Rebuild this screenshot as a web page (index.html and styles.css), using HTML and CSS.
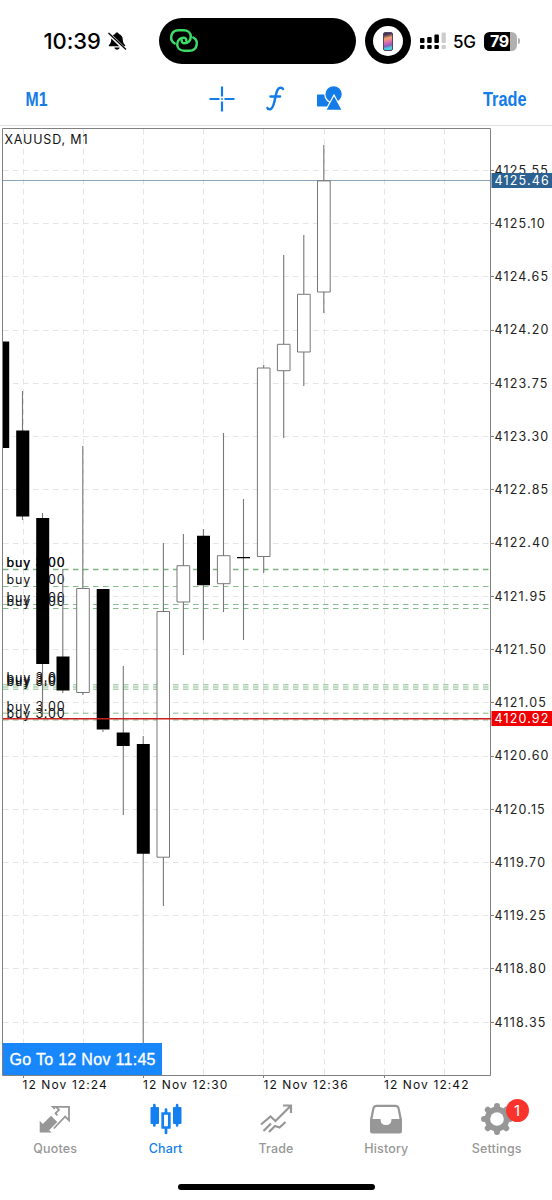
FILE: index.html
```html
<!DOCTYPE html>
<html lang="en">
<head>
<meta charset="utf-8">
<title>XAUUSD, M1</title>
<link rel="stylesheet" href="styles.css">
</head>
<body>
<div class="app">
  <header class="status">
    <span class="time">10:39</span>
    <svg class="bell" viewBox="0 0 20 20"><path d="M10 1.500c1 0 1.700.6 1.800 1.400 2.500.8 3.700 2.600 3.900 5 .2 3.300.6 4.200 2.300 6 .5.600.2 1.300-.6 1.300H2.600c-.8 0-1.100-.7-.6-1.300 1.700-1.800 2.100-2.700 2.300-6 .2-2.400 1.400-4.200 3.900-5 .1-.8.800-1.400 1.800-1.400zM7.400 16.500h5.200c-.2 1.300-1.200 2.200-2.600 2.200s-2.400-.9-2.600-2.200z"/><path class="cut" d="M1.500 2.500l16.500 16"/><path class="slash" d="M1.500 2l17.500 16.500"/></svg>
    <div class="island">
      <svg class="link" viewBox="0 0 30 26"><path d="M5.800 15.500C3 14 1.800 11 2.300 8.300 3 4.300 6 2.300 9.500 2.300h5C19 2.300 21.800 5 21.800 8.500c0 4-2.800 6.800-6.300 6.800-2 0-3-1.200-2.700-2.800M24.200 9.500c2.800 1.500 4 4.500 3.500 7.200-.7 4-3.700 6-7.200 6h-5C11 22.700 8.200 20 8.200 16.500c0-4 2.800-6.800 6.300-6.800 2 0 3 1.200 2.700 2.800"/></svg>
    </div>
    <div class="ring"><div class="ring-in"><span class="phone"></span></div></div>
    <svg class="signal" viewBox="0 0 27 18"><g><rect x="0" y="6" width="4.500" height="5" rx="1"/><rect x="7.200" y="5" width="4.500" height="6" rx="1"/><rect x="14.400" y="2.500" width="4.500" height="8.500" rx="1"/><rect x="0" y="13" width="4.500" height="4" rx="1"/><rect x="7.200" y="13" width="4.500" height="4" rx="1"/><rect x="14.400" y="13" width="4.500" height="4" rx="1"/></g><g class="dim"><rect x="21.600" y="0.500" width="4.200" height="10.500" rx="1"/><rect x="21.600" y="13" width="4.200" height="4" rx="1"/></g></svg>
    <span class="net">5G</span>
    <div class="battery"><span>79</span></div><i class="nub"></i>
  </header>

  <nav class="toolbar">
    <svg class="word m1" viewBox="0 0 32 32"><text x="1.500" y="23" textLength="22" lengthAdjust="spacingAndGlyphs">M1</text></svg>
    <div class="tools">
      <svg class="tool" viewBox="0 0 28 28"><path class="ln" d="M14 1.500v10M14 16.500v10M1.500 14h10M16.500 14h10M13.300 14h1.400"/></svg>
      <svg class="tool" viewBox="0 0 28 28"><path class="ln fx" d="M21 4c-.8-1.500-3.600-1.800-5.200.5-1.500 2-2 6-3.100 11-1.300 5.500-2.300 8.500-4.600 8.800-1.500.2-2.500-.6-2.700-1.300M8.500 11.500h9.500"/></svg>
      <svg class="tool" viewBox="0 0 28 28"><rect x="1" y="9.500" width="12.500" height="12" rx=".7"/><circle class="edge" cx="17.600" cy="9.300" r="8.800"/><path class="edge" d="M18 10L26.500 25.500H9.500z"/></svg>
    </div>
    <svg class="word trade" viewBox="0 0 52 32"><text x="3" y="23" textLength="43.500" lengthAdjust="spacingAndGlyphs">Trade</text></svg>
  </nav>

  <main class="chart">
    <svg viewBox="0 126 552 970">
      <g class="grid">
        <path d="M3 170.500H490M3 223.500H490M3 276.500H490M3 330.500H490M3 383.500H490M3 436.500H490M3 489.500H490M3 543.500H490M3 596.500H490M3 649.500H490M3 702.500H490M3 756.500H490M3 809.500H490M3 862.500H490M3 915.500H490M3 968.500H490M3 1022.500H490"/>
        <path d="M23.500 129V1075M83.500 129V1075M143.500 129V1075M203.500 129V1075M263.500 129V1075M324.500 129V1075M384.500 129V1075M444.500 129V1075"/>
      </g>
      <path class="order" d="M3 586.500H490M3 604.500H490M3 608.500H490M3 684.800H490M3 687H490M3 689.200H490M3 713.200H490M3 720H490"/>
      <path class="order strong" d="M3 569.500H490"/>
      <path class="bid" d="M3 180.500H490"/>
      <g class="buy">
        <text x="6.500" y="566.700">buy 3.00</text><text x="6.500" y="567.200">buy 3.00</text>
        <text x="6.500" y="584">buy 3.00</text>
        <text x="6.500" y="602">buy 3.00</text><text x="6.500" y="606">buy 3.00</text>
        <text x="6.500" y="682">buy 3.00</text><text x="6.500" y="684">buy 3.00</text><text x="6.500" y="686">buy 3.00</text>
        <text x="6.500" y="710.500">buy 3.00</text><text x="6.500" y="717.500">buy 3.00</text>
      </g>
      <path class="wick" d="M22.500 391V431M22.500 516V520M42.500 513V518M42.500 664V717M62.800 569V657M62.800 690V693M82.800 446V588M82.800 692V695M102.900 730V732M123.300 666V733M123.300 745V815M143.200 736V744M143.200 853V1043M163.400 543V611M163.400 857V906M183.400 534V566M183.400 602V655M203.400 529V536M203.400 585V640M223.500 433V556M223.500 583V612M243.500 499V640M263.700 365V368M263.700 556V573M283.700 255V344M283.700 371V438M303.800 235V294M303.800 352V386M323.800 145V181M323.800 292V313"/>
      <g class="down">
        <path d="M3 341.500H9.200V448H3zM16.200 430.500H29.300V516.500H16.200zM36.200 518H49.200V664H36.200zM56.500 656.500H69.500V690.500H56.500zM96.700 589H109.500V729.500H96.700zM116.700 732.500H129.700V746H116.700zM136.800 744H149.800V853.700H136.800zM197 535.700H210V585.300H197zM237 557H250V558.300H237z"/>
      </g>
      <g class="up">
        <path d="M76.700 588.500H89.300V692.500H76.700zM157 611.500H169.500V857.200H157zM177 565.700H189.700V602H177zM217.400 555.700H230V583.700H217.400zM257.400 368H270V556.500H257.400zM277.400 344.300H290V370.700H277.400zM297.500 294.300H310.200V352H297.500zM317.500 180.900H330.200V292H317.500z"/>
      </g>
      <path class="frame" d="M2.500 1075.500V128.500H490.500V1075.500H2.500M490 170.500H494M490 223.500H494M490 276.500H494M490 330.500H494M490 383.500H494M490 436.500H494M490 489.500H494M490 543.500H494M490 596.500H494M490 649.500H494M490 702.500H494M490 756.500H494M490 809.500H494M490 862.500H494M490 915.500H494M490 968.500H494M490 1022.500H494M23.500 1075V1078M143.500 1075V1078M263.500 1075V1078M384.500 1075V1078"/>
      <path class="ask" d="M3 718.700H491"/>
      <text class="symbol" x="4.500" y="144" textLength="83">XAUUSD, M1</text>
      <g class="price">
        <text x="494.500" y="174.500">4125.55</text><text x="494.500" y="227.700">4125.10</text><text x="494.500" y="281">4124.65</text><text x="494.500" y="334.200">4124.20</text><text x="494.500" y="387.500">4123.75</text><text x="494.500" y="440.700">4123.30</text><text x="494.500" y="494">4122.85</text><text x="494.500" y="547.200">4122.40</text><text x="494.500" y="600.500">4121.95</text><text x="494.500" y="653.700">4121.50</text><text x="494.500" y="707">4121.05</text><text x="494.500" y="760.200">4120.60</text><text x="494.500" y="813.500">4120.15</text><text x="494.500" y="866.700">4119.70</text><text x="494.500" y="920">4119.25</text><text x="494.500" y="973.200">4118.80</text><text x="494.500" y="1026.500">4118.35</text>
      </g>
      <g class="hours"><text x="22.500" y="1089">12 Nov 12:24</text><text x="143" y="1089">12 Nov 12:30</text><text x="263.500" y="1089">12 Nov 12:36</text><text x="384" y="1089">12 Nov 12:42</text></g>
      <rect class="bid-tag" x="491.500" y="173" width="61" height="15"/>
      <rect class="ask-tag" x="491.500" y="711" width="61" height="15"/>
      <g class="price tag"><text x="494.500" y="185.200">4125.46</text><text x="494.500" y="723.200">4120.92</text></g>
      <rect class="goto" x="3" y="1043" width="159" height="32"/>
      <text class="goto-text" x="9.500" y="1065" textLength="146">Go To 12 Nov 11:45</text>
    </svg>
  </main>

  <nav class="tabs">
    <a class="tab"><svg viewBox="0 0 34 34"><path d="M1.700 30.500V18.800l3.100 3.100 8.200-8.200 6.300 6.300-8.200 8.200 2.700 2.300z"/><path class="ol quote" d="M16.800 6.800l-2-2H31v13.500l-3.800-3.800L15.800 26.500M18 4.800l3 3-3.500 3.500 2 2"/></svg><span>Quotes</span></a>
    <a class="tab on"><svg viewBox="0 0 34 34"><path d="M1.500 6q0-1 1-1h1.500V3q0-1.200 1.300-1.200T6.700 3v2H9q1 0 1 1v15q0 1-1 1H6.700v1.500q0 1.200-1.400 1.200t-1.300-1.200V22H2.500q-1 0-1-1zM24 6q0-1 1-1h1.800V3q0-1.200 1.300-1.200T29.400 3v2h2.100q1 0 1 1v15q0 1-1 1h-2.100v1.500q0 1.200-1.300 1.200t-1.300-1.200V22h-1.800q-1 0-1-1z"/><path class="ol thick" d="M13.700 11.500h6.600v14h-6.600zM17 11V7.500M17 26v5"/></svg><span>Chart</span></a>
    <a class="tab"><svg viewBox="0 0 34 34"><path class="ol trend" d="M2 22.500l9.500-8 5 4.500L31.500 4M24 3.500h8v7.500M4.500 29l7.500-7.500M10 30l6-6 4.500 1.500 6-5.500"/></svg><span>Trade</span></a>
    <a class="tab"><svg viewBox="0 0 34 34"><path fill-rule="evenodd" d="M7 2.800h20q2.500 0 3.500 2.700l2.500 12V29q0 2.500-2.500 2.500h-27Q1 31.500 1 29V17.500L3.500 5.500Q4.500 2.800 7 2.800zM7.500 5Q6 5 5.500 6.500L3.500 17h8q0 6 5.500 6t5.500-6h8l-2-10.500Q28 5 26.500 5z"/></svg><span>History</span></a>
    <a class="tab"><svg viewBox="0 0 34 34"><path class="teeth" d="M17 4v26M4 17h26M7.800 7.800l18.400 18.400M26.200 7.800L7.800 26.200"/><circle cx="17" cy="17" r="12.400"/><circle class="hole" cx="17" cy="17" r="6.800"/></svg><span>Settings</span><b class="badge">1</b></a>
  </nav>
  <div class="home"></div>
</div>
</body>
</html>
```
FILE: styles.css
```css
* { box-sizing: border-box; }
body { margin: 0; background: #fff; font-family: Inter, "Liberation Sans", sans-serif; }
.app { width: 552px; height: 1200px; display: flex; flex-direction: column; overflow: hidden; }
svg { display: block; flex: none; }

.status { height: 72px; padding: 18px 0 8px 43.5px; display: flex; align-items: center; flex: none; }
.time { width: 63.5px; font-size: 22px; font-weight: 550; letter-spacing: -.1px; line-height: 48px; white-space: nowrap; }
.bell { width: 20px; height: 20px; }
.bell .cut { stroke: #fff; stroke-width: 3.2; }
.bell .slash { stroke: #000; stroke-width: 1.3; }
.island { width: 197px; height: 46px; margin-left: 31.5px; padding: 10px 0 0 10px; border-radius: 23px; background: #000; }
.link { width: 30px; height: 26px; fill: none; stroke: #3ddc68; stroke-width: 2.5; stroke-linecap: round; }
.ring { width: 46px; height: 46px; margin-left: 9px; padding: 8px; border-radius: 50%; background: #000; }
.ring-in { width: 30px; height: 30px; border-radius: 50%; background: #fff; display: flex; align-items: center; justify-content: center; }
.phone { width: 10px; height: 19px; border: 1px solid #53455c; border-radius: 2px; background: linear-gradient(165deg, #453454 12%, #f4a36c 32%, #d66bb0 55%, #8860bb 72%, #48cfe0 85%); }
.signal { width: 27px; height: 18px; margin-left: 9px; }
.dim { fill: #ccc; }
.net { width: 30.5px; margin-left: 6.5px; padding-top: 1px; font-size: 17px; letter-spacing: -.2px; font-weight: 450; }
.battery { width: 33px; height: 19px; border-radius: 5.5px; background: linear-gradient(90deg, #000 80%, #b0b0b0 80%); color: #fff; font-size: 16px; font-weight: 700; line-height: 19px; padding-left: 6.5px; letter-spacing: -.4px; }
.nub { width: 2px; height: 6px; margin-left: 1px; border-radius: 0 3px 3px 0; background: #b0b0b0; }

.toolbar { height: 54px; padding: 0 20px 0 24px; display: flex; align-items: center; flex: none; border-bottom: 1px solid #dedede; color: #147ce8; fill: currentColor; }
.word { font: bold 19.5px "Liberation Sans", sans-serif; height: 32px; }
.m1 { width: 32px; }
.trade { width: 52px; margin-left: auto; }
.tools { display: flex; gap: 26px; margin-left: 151.5px; }
.tool { width: 28px; height: 28px; }
.ln { fill: none; stroke: currentColor; stroke-width: 2.2; }
.fx { stroke-linecap: round; stroke-width: 2.5; }
.edge { stroke: #fff; stroke-width: 1.3; }

.chart { height: 970px; flex: none; }
.chart svg { width: 552px; height: 970px; }
.grid path { fill: none; stroke: #e4e4e4; stroke-dasharray: 5.5 4.5; }
.order { fill: none; stroke: #86bb8c; stroke-width: 1; stroke-dasharray: 5.5 4.5; }
.strong { stroke-width: 1.6; stroke: #7db383; }
.bid { stroke: #8ba4b9; }
.wick { fill: none; stroke: #777; stroke-width: 1.1; }
.down { fill: #000; }
.up { fill: #fff; stroke: #777; stroke-width: 1; }
.frame { fill: none; stroke: #808080; }
.ask { stroke: #c8201d; stroke-width: 1.5; }
.buy { font-size: 12.5px; letter-spacing: .85px; fill: #111; }
.hours { font-size: 12px; letter-spacing: 1.1px; fill: #111; }
.symbol { font-size: 12.5px; fill: #111; }
.price { font-size: 12.5px; letter-spacing: 1.15px; fill: #222; }
.bid-tag { fill: #2c6291; }
.ask-tag { fill: #f00000; }
.tag { fill: #fff; }
.goto { fill: #1787fb; }
.goto-text { font: 16px "Liberation Sans", sans-serif; fill: #fff; stroke: #fff; stroke-width: .35px; }

.tabs { height: 74px; display: grid; grid-template-columns: repeat(5, 110.4px); flex: none; color: #979797; fill: currentColor; }
.tab { position: relative; display: flex; flex-direction: column; align-items: center; padding-top: 6px; font-size: 12.5px; line-height: 16px; font-weight: 500; letter-spacing: .15px; gap: 5px; }
.tab svg { width: 34px; height: 34px; }
.tab.on { color: #147ff0; }
.ol { fill: none; stroke: currentColor; stroke-width: 1.8; }
.thick { stroke-width: 2.7; stroke-linecap: round; }
.trend { stroke-width: 2.2; }
.teeth { stroke: currentColor; stroke-width: 6; stroke-linecap: round; }
.hole { fill: #fff; }
.badge { position: absolute; left: 64px; top: 3px; width: 23px; height: 23px; border-radius: 50%; background: #fa342d; color: #fff; font-size: 15px; font-weight: 400; line-height: 23px; text-align: center; }
.home { width: 197px; height: 6px; margin: 14px 0 0 178px; border-radius: 3px; background: #000; flex: none; }
```
